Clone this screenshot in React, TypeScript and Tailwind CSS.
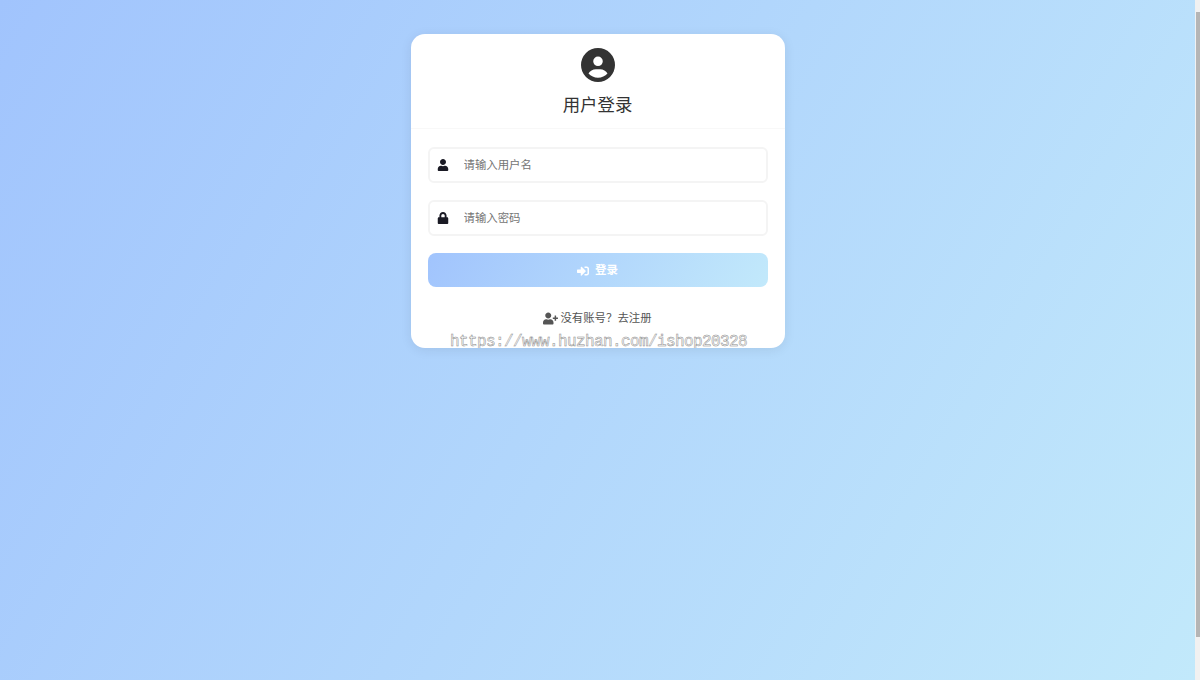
import {FaUser, FaLock, FaSignInAlt, FaUserPlus} from "react-icons/fa";
import {FaCircleUser} from "react-icons/fa6";

const font = "font-['Inter','Noto_Sans_CJK_SC',sans-serif]";

function Field({icon, placeholder, type}: {icon: React.ReactNode; placeholder: string; type: string}) {
    return (
        <div className="flex items-center h-[36px] rounded-[6px] border-2 border-[#f4f4f4] bg-white">
            <span className="w-[26px] flex justify-center text-[#1a1a24] text-[12px]">{icon}</span>
            <input
                type={type}
                placeholder={placeholder}
                className="flex-1 min-w-0 ml-[8px] pt-[2px] text-[11.4px] outline-none placeholder:text-[#757575]"
            />
        </div>
    );
}

export default function App() {
    return (
        <div className={`${font} flex h-[680px] overflow-hidden`}>
            <div className="flex-1 flex justify-center items-start pt-[34px] bg-[linear-gradient(120deg,#a1c4fd_0%,#c2e9fb_100%)]">
                <div className="w-[374px] h-[314px] overflow-hidden rounded-[14px] bg-white shadow-[0_2px_12px_rgba(0,0,0,0.08)]">
                    <div className="h-[95px] flex flex-col items-center border-b border-[#f8f8f8] pt-[14px]">
                        <FaCircleUser className="text-[#333] text-[34px]" />
                        <h1 className="mt-[11px] text-[17.4px] leading-[24px] text-[#333]">用户登录</h1>
                    </div>
                    <div className="px-[17px] pt-[18px]">
                        <Field icon={<FaUser />} placeholder="请输入用户名" type="text" />
                        <div className="h-[17px]" />
                        <Field icon={<FaLock />} placeholder="请输入密码" type="password" />
                        <button className="mt-[17px] w-full h-[34px] pt-[2px] flex items-center justify-center gap-[6px] rounded-[8px] text-white text-[11.5px] font-bold bg-[linear-gradient(120deg,#a1c4fd_0%,#c2e9fb_100%)]">
                            <FaSignInAlt className="text-[12px]" />
                            登录
                        </button>
                        <div className="mt-[22px] flex items-center justify-center gap-[2px] text-[11.4px] leading-[18px] text-[#555]">
                            <FaUserPlus className="text-[15px]" />
                            {"没有账号\uFF1F去注册"}
                        </div>
                        <div className="pl-[2px] text-center whitespace-nowrap font-['Liberation_Mono',monospace] text-[16px] tracking-[-0.6px] leading-[20px] mt-[5px] text-white [-webkit-text-stroke:0.5px_#888]">
                            https://www.huzhan.com/ishop20328
                        </div>
                    </div>
                </div>
            </div>
            <div className="w-[5px] flex flex-col bg-[#f1f1f1]">
                <div className="h-[12px]" />
                <div className="h-[625px] ml-[1px] bg-[#b5b5b5]" />
            </div>
        </div>
    );
}
